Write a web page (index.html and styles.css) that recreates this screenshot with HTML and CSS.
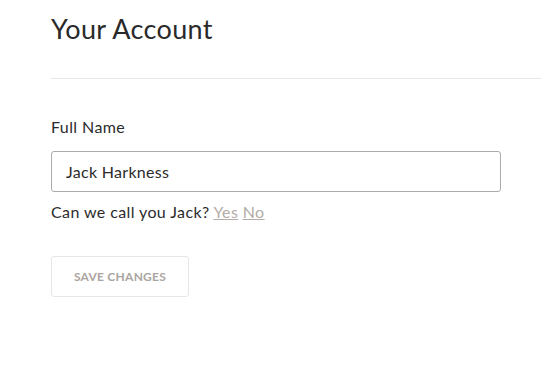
FILE: index.html
```html
<!DOCTYPE html>
<html lang="en">
<head>
    <meta charset="UTF-8">
    <meta name="viewport" content="width=device-width, initial-scale=1.0">
    <title>Your Account</title>
    <link rel="stylesheet" href="styles.css">
</head>
<body>
    <div class="account">
        <h1 class="page-title">Your Account</h1>

        <form class="account-form">
            <label class="field-label" for="fullName">Full Name</label>
            <input class="text-input" id="fullName" type="text" value="Jack Harkness">
            <div class="nickname">
                Can we call you Jack? <a href="#" class="choice">Yes</a> <a href="#" class="choice">No</a>
            </div>

            <button type="button" class="btn-save">Save Changes</button>
        </form>
    </div>
</body>
</html>
```

FILE: styles.css
```css
* {
    margin: 0;
    padding: 0;
    box-sizing: border-box;
}

body {
    font-family: 'Lato', 'Liberation Sans', sans-serif;
    background: #fff;
    color: #2b2b2b;
}

.account {
    padding-left: 51px;
}

.page-title {
    font-size: 27px;
    font-weight: 400;
    letter-spacing: 0.35px;
    color: #2a2a2a;
    padding-top: 13px;
    padding-bottom: 33px;
    border-bottom: 1px solid #e8e8e8;
    line-height: 32px;
}

.account-form {
    display: flex;
    flex-direction: column;
    align-items: flex-start;
    padding-top: 38px;
}

.field-label {
    font-size: 16px;
    letter-spacing: 0.4px;
    line-height: 20px;
    margin-bottom: 14px;
}

.text-input {
    width: 450px;
    height: 41px;
    border: 1px solid #ababab;
    border-radius: 3px;
    padding: 0 14px;
    font-family: inherit;
    font-size: 16px;
    letter-spacing: 0.3px;
    color: #2b2b2b;
    background: #fff;
}

.nickname {
    font-size: 16px;
    letter-spacing: 0.4px;
    line-height: 20px;
    margin-top: 10px;
}

.choice {
    color: #b3aca6;
    text-decoration: underline;
}

.btn-save {
    margin-top: 34px;
    width: 138px;
    height: 41px;
    border: 1px solid #e6e6e6;
    border-radius: 3px;
    background: #fff;
    color: #aba59f;
    font-family: inherit;
    font-size: 12px;
    font-weight: 700;
    text-transform: uppercase;
    letter-spacing: 0.25px;
}
```
